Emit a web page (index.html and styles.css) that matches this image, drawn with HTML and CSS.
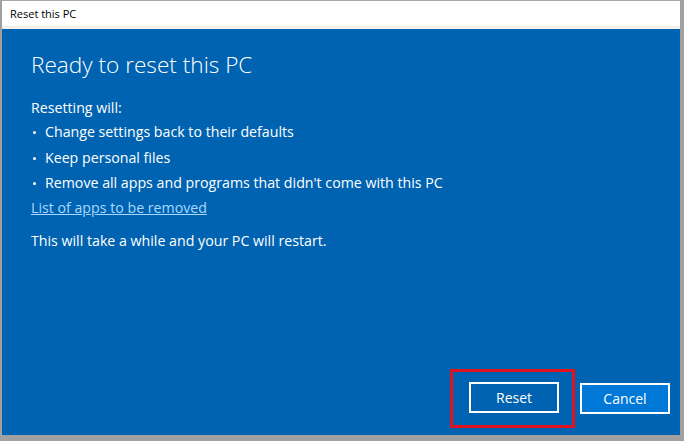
FILE: index.html
```html
<!DOCTYPE html>
<html lang="en">

<head>
    <meta charset="UTF-8">
    <meta name="viewport" content="width=device-width, initial-scale=1.0">
    <title>Reset this PC</title>
    <link rel="stylesheet" href="styles.css">
</head>

<body>
    <div class="window">
        <div class="titlebar">Reset this PC</div>
        <div class="content">
            <h1>Ready to reset this PC</h1>
            <p class="lead">Resetting will:</p>
            <ul class="changes">
                <li>Change settings back to their defaults</li>
                <li>Keep personal files</li>
                <li>Remove all apps and programs that didn't come with this PC</li>
            </ul>
            <a class="link" href="#">List of apps to be removed</a>
            <p class="note">This will take a while and your PC will restart.</p>

            <div class="footer">
                <div class="highlight">
                    <button class="btn btn-reset">Reset</button>
                </div>
                <button class="btn btn-cancel">Cancel</button>
            </div>
        </div>
    </div>
</body>

</html>
```

FILE: styles.css
```css
body {
    margin: 0;
    padding: 0;
    background-color: #9a9a9a;
    font-family: "Open Sans", "Noto Sans", sans-serif;
}

.window {
    box-sizing: border-box;
    width: 684px;
    height: 441px;
    display: flex;
    flex-direction: column;
    border-top: 1px solid #a8a8a8;
    border-left: 2px solid #a0a0a0;
    border-right: 4px solid #a0a0a0;
    border-bottom: 6px solid #a0a0a0;
}

.titlebar {
    height: 25px;
    line-height: 26px;
    padding-left: 8px;
    background-color: #fff;
    border-bottom: 3px solid #f3f0ec;
    color: #000;
    font-size: 11px;
}

.content {
    flex: 1;
    display: flex;
    flex-direction: column;
    padding: 0 10px 7px 29px;
    background-color: #0063b1;
    color: #fff;
}

h1 {
    margin: 21px 0 0;
    font-size: 22.6px;
    font-weight: 300;
    line-height: 30px;
}

.lead {
    margin: 17px 0 0;
    font-size: 14.2px;
    line-height: 22px;
}

.changes {
    margin: 0;
    padding: 0;
    list-style: none;
    font-size: 14.2px;
}

.changes li {
    position: relative;
    padding-left: 14px;
    line-height: 25.5px;
}

.changes li::before {
    content: "";
    position: absolute;
    left: 2px;
    top: 12px;
    width: 3px;
    height: 3px;
    border-radius: 50%;
    background-color: #fff;
}

.link {
    align-self: flex-start;
    color: #a6d8ff;
    font-size: 14.2px;
    line-height: 24px;
    text-decoration: underline;
}

.note {
    margin: 10px 0 0;
    font-size: 14.2px;
    line-height: 22px;
}

.footer {
    margin-top: auto;
    display: flex;
    justify-content: flex-end;
    align-items: center;
    gap: 5px;
}

.highlight {
    padding: 10px 13px 12px 16px;
    border: 3px solid #e0141e;
}

.btn {
    box-sizing: border-box;
    width: 90px;
    height: 31px;
    border: 2px solid #fff;
    color: #fff;
    font-family: inherit;
    font-size: 14px;
    cursor: pointer;
}

.btn-reset {
    display: block;
    background-color: #0063b1;
}

.btn-cancel {
    background-color: #0078d7;
}
```
